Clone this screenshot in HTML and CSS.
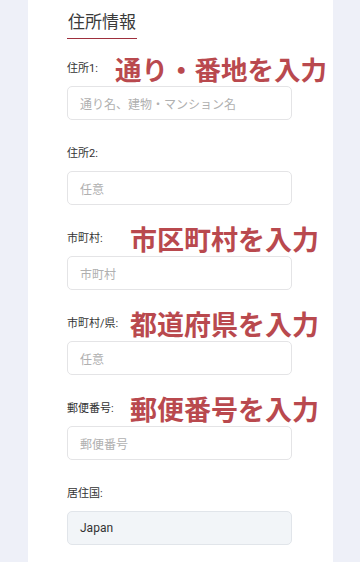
FILE: index.html
```html
<!DOCTYPE html>
<html lang="ja">
<head>
<meta charset="utf-8">
<link rel="stylesheet" href="styles.css">
</head>
<body>
<div class="card">
  <div class="title-wrap"><h2 class="title">住所情報</h2></div>
  <div class="fields">
    <div class="field">
      <div class="label-row"><span class="label">住所1:</span><span class="note note-near">通り・番地を入力</span></div>
      <div class="input"><span class="ph">通り名、建物・マンション名</span></div>
    </div>
    <div class="field">
      <div class="label-row"><span class="label">住所2:</span></div>
      <div class="input"><span class="ph">任意</span></div>
    </div>
    <div class="field">
      <div class="label-row"><span class="label">市町村:</span><span class="note">市区町村を入力</span></div>
      <div class="input"><span class="ph">市町村</span></div>
    </div>
    <div class="field">
      <div class="label-row"><span class="label">市町村/県:</span><span class="note">都道府県を入力</span></div>
      <div class="input"><span class="ph">任意</span></div>
    </div>
    <div class="field">
      <div class="label-row"><span class="label">郵便番号:</span><span class="note">郵便番号を入力</span></div>
      <div class="input"><span class="ph">郵便番号</span></div>
    </div>
    <div class="field">
      <div class="label-row"><span class="label">居住国:</span></div>
      <div class="input input-filled"><span class="val">Japan</span></div>
    </div>
  </div>
</div>
</body>
</html>
```
FILE: styles.css
```css
html, body {
  margin: 0;
  padding: 0;
}
body {
  background: #eef0f8;
  font-family: "Roboto", "Noto Sans CJK JP", sans-serif;
  color: #333;
}
.card {
  margin-left: 28px;
  width: 305px;
  background: #fff;
  box-sizing: border-box;
  padding: 10px 41px 16px 39px;
  min-height: 562px;
}
.title-wrap {
  display: block;
}
.title {
  display: inline-block;
  margin: 0;
  padding: 0 1px 4px 1px;
  font-size: 17px;
  line-height: 24px;
  font-weight: 400;
  color: #3a3a3a;
  border-bottom: 1.5px solid #9e2f3d;
}
.fields {
  margin-top: 22px;
  display: flex;
  flex-direction: column;
  gap: 26px;
}
.field {
  display: flex;
  flex-direction: column;
  gap: 9px;
}
.label-row {
  position: relative;
  height: 16px;
  display: flex;
  align-items: center;
}
.label {
  font-size: 11px;
  line-height: 16px;
  color: #333;
}
.note {
  position: absolute;
  left: 63px;
  top: 50%;
  transform: translateY(-50%);
  font-family: "Noto Sans CJK JP", sans-serif;
  font-size: 27px;
  line-height: 30px;
  font-weight: 700;
  color: #b9494e;
  white-space: nowrap;
}
.note-near {
  left: 48px;
  font-size: 26.5px;
}
.input {
  height: 34px;
  box-sizing: border-box;
  border: 1px solid #e4e4e6;
  border-radius: 5px;
  display: flex;
  align-items: center;
  padding-left: 12px;
  background: #fff;
}
.ph {
  font-size: 12px;
  color: #b0b0b0;
}
.input-filled {
  background: #f2f5f8;
  border-color: #e1e5ea;
}
.val {
  font-size: 12px;
  color: #333;
}
```
